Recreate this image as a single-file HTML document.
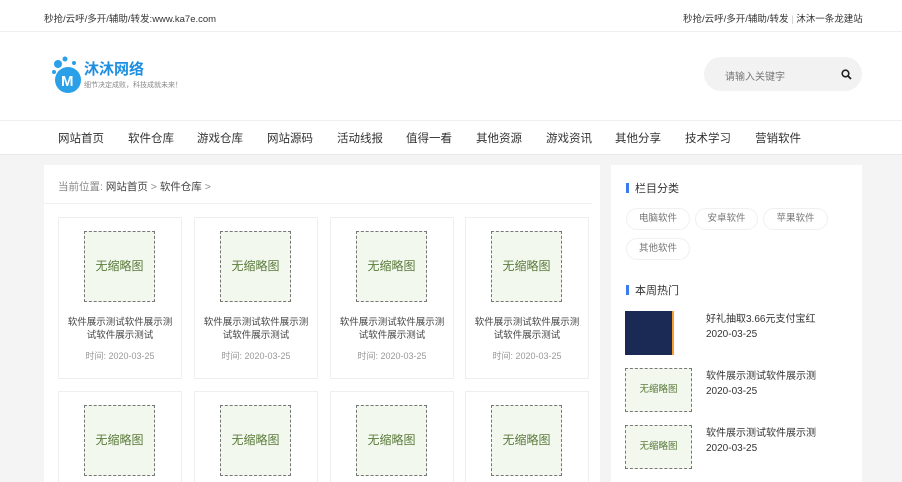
<!DOCTYPE html>
<html style="width:902px;height:482px;overflow:hidden"><head><meta charset="utf-8"><style>
*{margin:0;padding:0;box-sizing:border-box}
body{width:902px;height:482px;overflow:hidden;background:#f4f4f4;font-family:"Liberation Sans","Noto Sans CJK SC",sans-serif;color:#333;position:relative}
.a{position:absolute}
.top{left:0;top:0;width:902px;height:32px;background:#fff;border-bottom:1px solid #eee;font-size:9.5px}
.hdr{left:0;top:32px;width:902px;height:123px;background:#fff;border-bottom:1px solid #e8e8e8}
.nav{top:120px;left:0;width:902px;height:35px;border-top:1px solid #f0f0f0}
.nav span{position:absolute;top:9px;font-size:11.5px;color:#333}
.main{left:44px;top:165px;width:556px;height:317px;background:#fff;overflow:hidden}
.side{left:611px;top:165px;width:251px;height:317px;background:#fff}
.card{width:124px;height:162px;border:1px solid #eee;background:#fff}
.th{position:absolute;left:25px;top:13px;width:71px;height:71px;border:1px dashed #777;background:#f2f8ee;color:#5a7a3a;font-size:12px;text-align:center;line-height:69px}
.ct{position:absolute;left:0;width:122px;text-align:center;font-size:9.5px;color:#444;line-height:13px;top:98px}
.tm{position:absolute;left:0;width:122px;text-align:center;font-size:9px;color:#999;top:131px}
.pill{position:absolute;height:22px;border:1px solid #f0f0f0;border-radius:11px;font-size:9.5px;color:#777;text-align:center;line-height:20px}
.h{position:absolute;font-size:11px;color:#333}
.h:before{content:"";position:absolute;left:-9px;top:3px;width:3px;height:10px;background:#3a7cf0}
.sth{position:absolute;left:14px;width:67px;height:44px;border:1px dashed #777;background:#f2f8ee;color:#5a7a3a;font-size:9.5px;text-align:center;line-height:42px}
.st{position:absolute;left:95px;font-size:10px;color:#333}
</style></head><body>
<div class="a top"><span class="a" style="left:44px;top:11px">秒抢/云呼/多开/辅助/转发:www.ka7e.com</span><span class="a" style="left:683px;top:11px">秒抢/云呼/多开/辅助/转发 <span style="color:#ccc">|</span> 沐沐一条龙建站</span></div>
<div class="a hdr">
<svg class="a" style="left:50px;top:22px" width="34" height="42"><circle cx="18" cy="26" r="13" fill="#2aa0e8"/><circle cx="8" cy="10" r="4" fill="#2aa0e8"/><circle cx="15" cy="5" r="2.5" fill="#2aa0e8"/><circle cx="4" cy="18" r="2" fill="#2aa0e8"/><circle cx="24" cy="9" r="2" fill="#2aa0e8"/><text x="11" y="32" fill="#fff" font-size="15" font-weight="bold" font-family="Liberation Sans">M</text></svg>
<span class="a" style="left:84px;top:26px;font-size:15px;font-weight:bold;color:#1e8fe0">沐沐网络</span>
<span class="a" style="left:84px;top:48px;font-size:7px;color:#888">细节决定成败，科技成就未来！</span>
<div class="a" style="left:704px;top:25px;width:158px;height:34px;border-radius:17px;background:#f2f2f2"><span class="a" style="left:21px;top:11px;font-size:10px;color:#777">请输入关键字</span>
<svg class="a" style="left:137px;top:12px" width="11" height="11"><circle cx="4.5" cy="4.5" r="3.3" fill="none" stroke="#222" stroke-width="1.6"/><line x1="7" y1="7" x2="10" y2="10" stroke="#222" stroke-width="1.8"/></svg></div>
</div>
<div class="a nav"><span style="left:58px">网站首页</span><span style="left:128px">软件仓库</span><span style="left:197px">游戏仓库</span><span style="left:267px">网站源码</span><span style="left:337px">活动线报</span><span style="left:406px">值得一看</span><span style="left:476px">其他资源</span><span style="left:546px">游戏资讯</span><span style="left:615px">其他分享</span><span style="left:685px">技术学习</span><span style="left:755px">营销软件</span></div>
<div class="a main">
<span class="a" style="left:14px;top:14px;font-size:10.5px;color:#888">当前位置: <span style="color:#444">网站首页</span> &gt; <span style="color:#444">软件仓库</span> &gt;</span>
<div class="a" style="left:0;top:38px;width:548px;border-top:1px solid #f0f0f0"></div>
<div id="g"></div>
</div>
<div class="a side">
<span class="h" style="left:24px;top:15px">栏目分类</span>
<div class="pill" style="left:15px;top:43px;width:64px">电脑软件</div>
<div class="pill" style="left:84px;top:43px;width:63px">安卓软件</div>
<div class="pill" style="left:152px;top:43px;width:65px">苹果软件</div>
<div class="pill" style="left:15px;top:73px;width:64px">其他软件</div>
<span class="h" style="left:24px;top:117px">本周热门</span>
<div class="a" style="left:14px;top:146px;width:67px;height:44px;background:linear-gradient(90deg,#1a2a55 0 70%,#f6a030 70% 73%,#fff 73%)"></div>
<span class="st" style="top:145px">好礼抽取3.66元支付宝红</span><span class="st" style="top:164px">2020-03-25</span>
<div class="sth" style="top:203px">无缩略图</div>
<span class="st" style="top:202px">软件展示测试软件展示测</span><span class="st" style="top:221px">2020-03-25</span>
<div class="sth" style="top:260px">无缩略图</div>
<span class="st" style="top:259px">软件展示测试软件展示测</span><span class="st" style="top:278px">2020-03-25</span>
</div>
<script>
var xs=[14,150,286,421],ys=[52,226],h='';
ys.forEach(function(y){xs.forEach(function(x){h+='<div class="a card" style="left:'+x+'px;top:'+y+'px"><div class="th">无缩略图</div><div class="ct">软件展示测试软件展示测<br>试软件展示测试</div><div class="tm">时间: 2020-03-25</div></div>'})});
document.getElementById('g').innerHTML=h;
</script>
</body></html>
